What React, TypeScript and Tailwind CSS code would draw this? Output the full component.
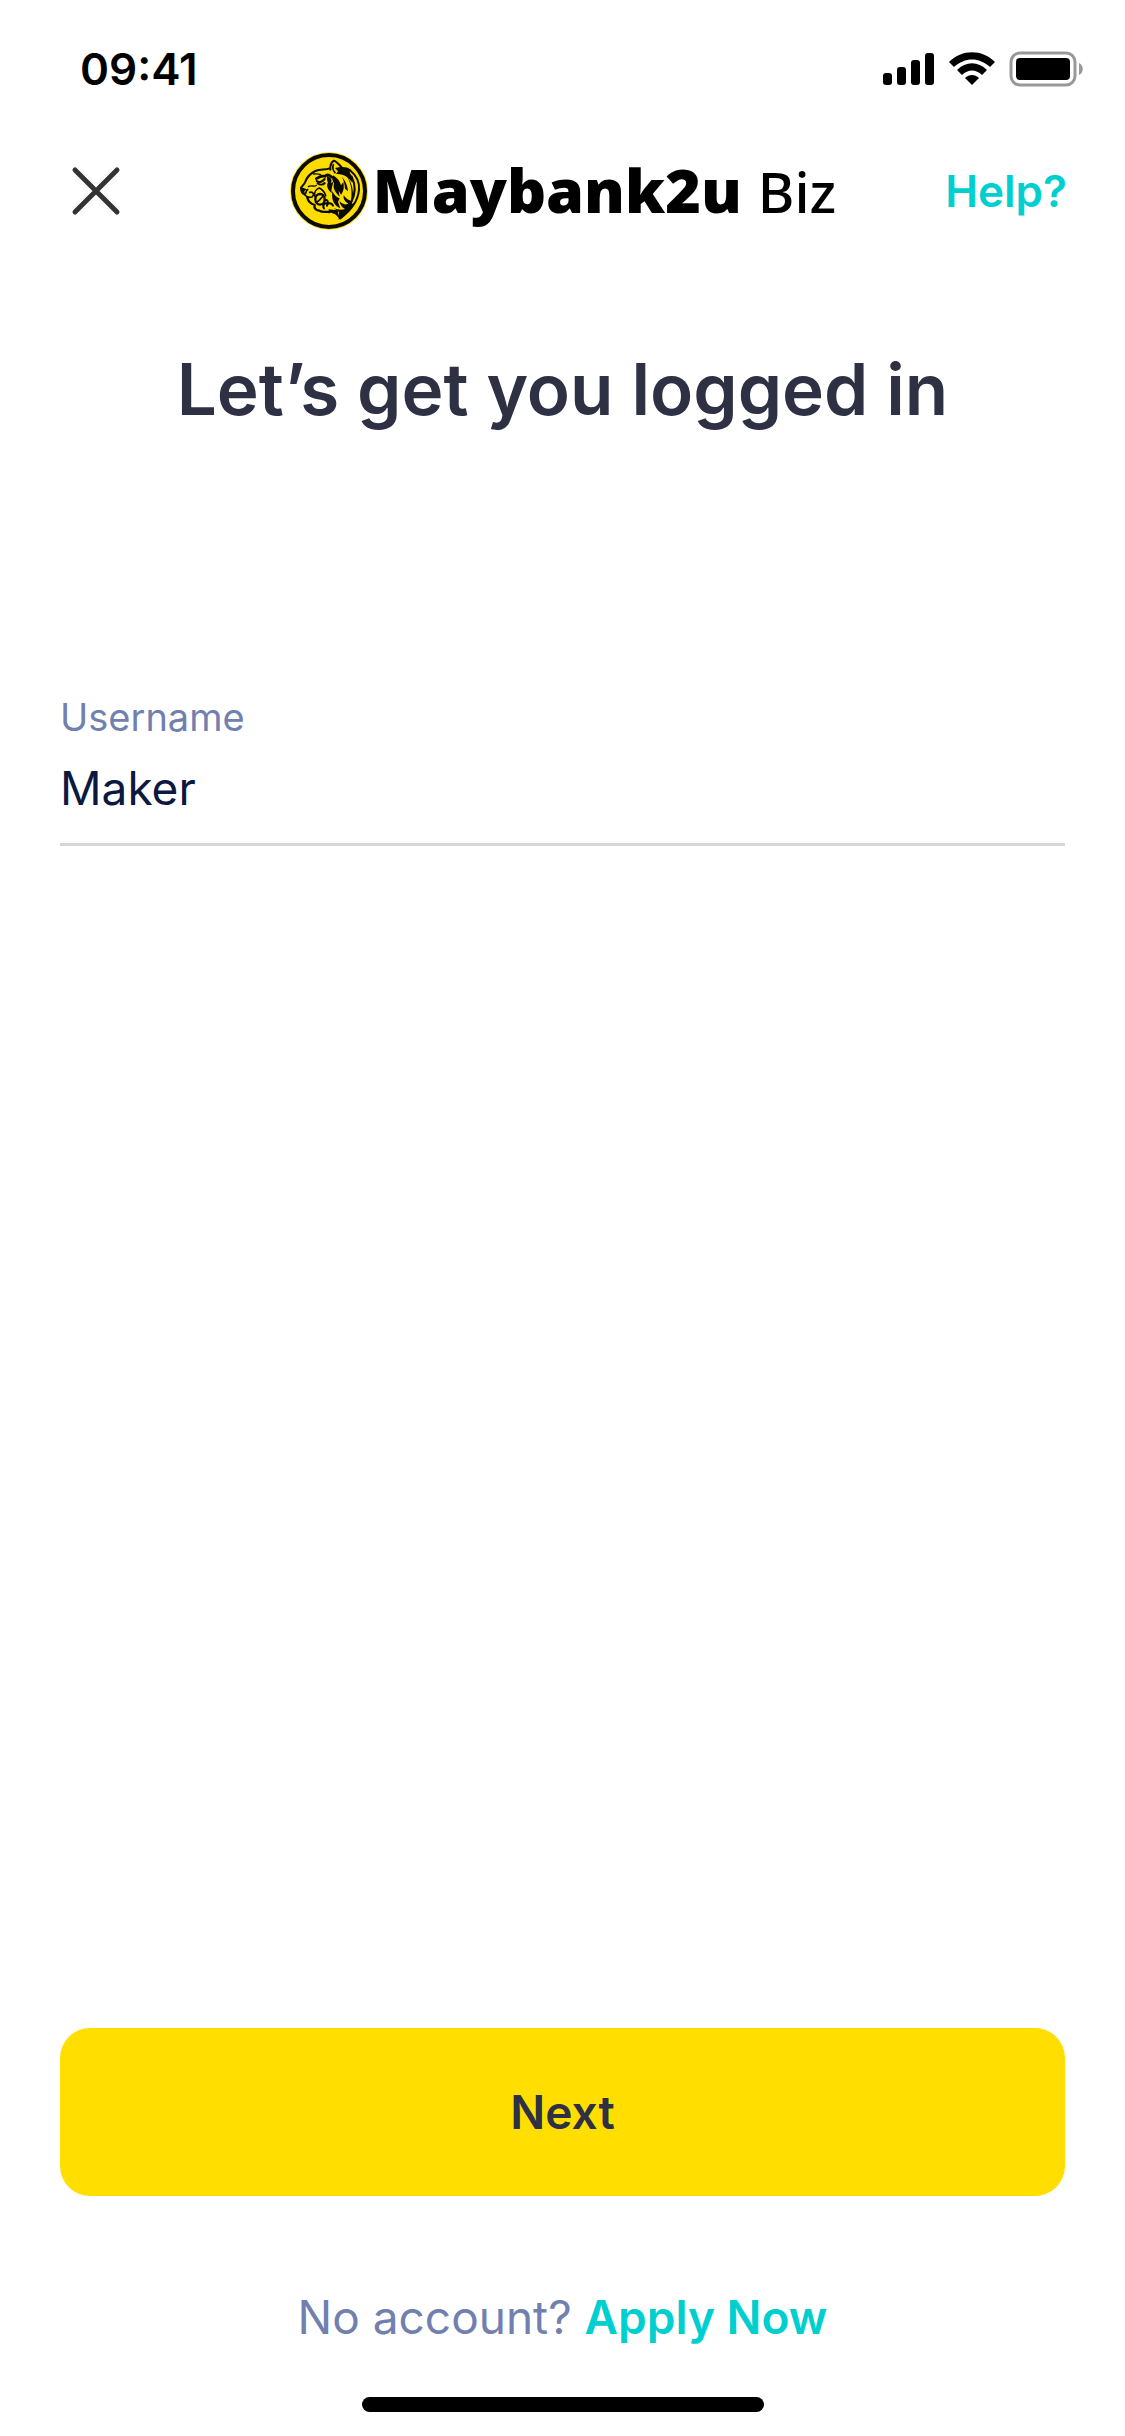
function TigerEmblem() {
  return (
    <svg viewBox="30 35 240 240" className="size-20 shrink-0" aria-hidden="true">
      <circle cx="150" cy="155" r="117" fill="#ffe21a" />
      <circle cx="150" cy="155" r="108" fill="#fddc00" stroke="#0a0a00" strokeWidth="12" />
      <g fill="none" stroke="#0a0a00" strokeWidth="5" strokeLinecap="round" strokeLinejoin="round">
        <path d="M66 146C70 139 75 136 78 129C84 112 94 102 109 95C124 88 140 93 152 87" strokeWidth="6" />
        <path d="M154 91C153 78 156 69 165 64C174 68 181 76 187 83" strokeWidth="6" />
        <path d="M163 76C160 84 162 93 168 100" />
        <path d="M66 147C66 157 70 166 77 165C84 161 79 153 86 151" />
        <path d="M78 167C84 175 91 176 100 172C107 166 103 156 92 159" />
        <path d="M85 175C88 187 98 194 107 197C104 207 112 213 121 214C130 221 143 216 151 218" strokeWidth="7" />
        <ellipse cx="123" cy="180" rx="14" ry="16" strokeWidth="7" />
        <path d="M112 190C120 183 128 176 133 169" />
        <path d="M107 170C105 158 112 149 121 146C131 151 137 159 140 169" />
        <path d="M139 183C143 180 148 184 146 191C136 190 129 199 135 207" strokeWidth="6" />
        <path d="M144 199C144 190 157 188 162 199" strokeWidth="6" />
        <path d="M112 118C120 113 127 108 138 111C144 103 153 108 159 114" strokeWidth="8" />
        <path d="M113 125C121 132 131 126 137 119M116 132C123 137 132 137 137 131" strokeWidth="6" />
        <path d="M103 104C110 103 118 103 125 106" strokeWidth="4" />
        <path d="M88 142C98 135 106 145 112 138" strokeWidth="4" />
        <path d="M212 92C232 108 242 130 240 152C237 182 218 212 184 237" strokeWidth="6" />
        <path d="M218 112C230 136 230 164 216 190" strokeWidth="6" />
      </g>
      <g fill="#0a0a00">
        <path d="M65 143L84 150L76 155L78 164C67 160 62 153 65 143Z" />
        <path d="M168 86C186 82 207 80 218 94C210 94 211 98 217 108C222 118 222 124 220 130C210 115 193 102 171 104L177 96Z" />
        <path d="M200 106C215 126 221 150 216 184C211 184 201 178 194 168C192 178 198 188 208 192C202 199 190 194 181 185C183 195 188 204 198 209C186 213 175 210 164 206L180 218L179 241C203 226 219 208 228 186C224 192 221 194 218 194C227 164 222 130 200 106Z" />
        <path d="M144 110C158 114 160 124 155 132L163 127C160 140 156 150 158 162C146 151 141 139 147 129C144 125 143 118 144 110Z" />
        <path d="M162 108C174 115 183 126 186 138L193 128C196 145 194 156 186 166L179 154L182 172C168 159 161 146 165 132C160 126 158 118 162 108Z" />
        <path d="M160 155C166 168 174 175 182 177L177 188L184 207C167 200 156 184 160 155Z" />
        <path d="M188 112C198 122 206 138 207 156L198 148C197 134 195 123 188 112Z" />
        <path d="M149 210L176 213L182 240C173 225 162 219 149 220Z" />
      </g>
    </svg>
  );
}

function StatusIcons() {
  return (
    <svg viewBox="882 50 204 38" className="h-[38px] w-[204px]" role="img" aria-label="Signal, Wi-Fi and battery">
      <rect x="883" y="73" width="9" height="12" rx="3" />
      <rect x="897" y="67" width="9" height="18" rx="3" />
      <rect x="911" y="60" width="9" height="25" rx="3" />
      <rect x="925" y="53" width="9" height="32" rx="3" />
      <path d="M949 62C962 49 982 49 995 62L990 67C979 57 965 57 954 67Z" />
      <path d="M957 70C966 61 978 61 987 70L982 75C976 69 968 69 962 75Z" />
      <path d="M965 78C969 74 975 74 979 78L972 85Z" />
      <rect x="1011" y="53" width="64" height="32" rx="9" fill="none" stroke="#999" strokeWidth="3" />
      <rect x="1016" y="58" width="54" height="22" rx="4" />
      <path d="M1079 63C1084 65 1084 73 1079 75Z" fill="#999" />
    </svg>
  );
}

export default function App() {
  return (
    <div className="flex min-h-screen flex-col bg-white font-['Inter',sans-serif] text-[#2e3043]">
      <div className="flex h-[138px] items-center justify-between pl-20 pr-[39px] text-black">
        <time className="text-[44px] leading-none font-semibold">09:41</time>
        <StatusIcons />
      </div>

      <header className="grid h-[106px] grid-cols-[1fr_auto_1fr] items-center px-[58px]">
        <button type="button" aria-label="Close" className="flex size-[76px] items-center justify-center">
          <svg viewBox="0 0 50 50" className="size-[50px]" fill="none" stroke="#333" strokeWidth="5" strokeLinecap="round">
            <path d="M4 4L46 46M46 4L4 46" />
          </svg>
        </button>
        <div className="flex items-center gap-1 text-black">
          <TigerEmblem />
          <div className="flex items-baseline gap-4 pb-1 leading-none">
            <span className="font-['Open_Sans',sans-serif] text-[61px] font-extrabold">Maybank2u</span>
            <span className="font-['Noto_Sans',sans-serif] text-[56px] font-medium">Biz</span>
          </div>
        </div>
        <a href="#help" className="justify-self-end text-[44px] leading-none font-semibold text-[#00cfcf]">
          Help?
        </a>
      </header>

      <main className="flex grow flex-col px-[60px]">
        <h1 className="mt-[101px] text-center text-[71px] leading-[88px] font-semibold">Let’s get you logged in</h1>
        <form className="flex grow flex-col" onSubmit={(e) => e.preventDefault()}>
          <label htmlFor="username" className="mt-[260px] text-[38px] leading-[48px] text-[#7280b0]">
            Username
          </label>
          <input
            id="username"
            type="text"
            defaultValue="Maker"
            className="h-[105px] w-full border-b-3 border-[#d6d6d6] pb-2 text-[46px] text-[#0c183f] outline-none"
          />
          <button type="submit" className="mt-auto h-[168px] w-full rounded-[30px] bg-[#ffde00] text-[46px] font-semibold">
            Next
          </button>
        </form>
      </main>

      <footer className="flex flex-col items-center pt-[92px] pb-6">
        <p className="text-[46px] leading-[58px] text-[#7280b0]">
          No account?{" "}
          <a href="#apply" className="font-semibold text-[#00cfcf]">
            Apply Now
          </a>
        </p>
        <div className="mt-[51px] h-[15px] w-[402px] rounded-full bg-black" />
      </footer>
    </div>
  );
}
